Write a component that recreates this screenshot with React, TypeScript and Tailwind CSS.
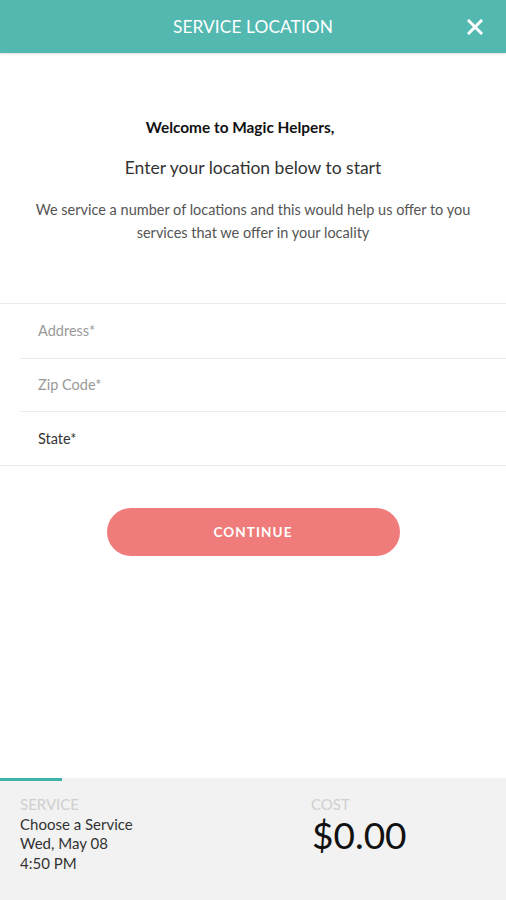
import React from "react";

export default function App() {
  return (
    <div className="w-[506px] h-[900px] flex flex-col bg-white text-[#333]" style={{ fontFamily: "Lato, 'Open Sans', sans-serif" }}>
      <header className="h-[53px] bg-[#52b8b0] flex items-center justify-center relative shadow-[0_1px_2px_rgba(0,0,0,0.15)] shrink-0">
        <h1 className="text-white text-[17.3px] tracking-[0.1px]">SERVICE LOCATION</h1>
        <svg className="absolute right-[23px] top-[19px]" width="16" height="16" viewBox="0 0 16 16">
          <path d="M2 2 L14 14 M14 2 L2 14" stroke="white" strokeWidth="3" strokeLinecap="square" />
        </svg>
      </header>
      <main className="flex-1 flex flex-col">
        <div className="flex flex-col items-center text-center pt-[64px]">
          <p className="text-[15.4px] font-bold text-[#111] leading-[20px] pr-[26px]">Welcome to Magic Helpers,</p>
          <p className="text-[17.5px] text-[#333] leading-[20px] mt-[21px]">Enter your location below to start</p>
          <p className="text-[14.5px] text-[#555] leading-[23px] mt-[20px] px-[20px]">
            We service a number of locations and this would help us offer to you
            <br />
            services that we offer in your locality
          </p>
        </div>
        <div className="mt-[59px] border-t border-b border-[#ebebeb]">
          <div className="ml-[20px] h-[55px] flex items-center pl-[18px] border-b border-[#ebebeb]">
            <span className="text-[14.5px] text-[#999]">Address*</span>
          </div>
          <div className="ml-[20px] h-[53px] flex items-center pl-[18px] border-b border-[#ebebeb]">
            <span className="text-[14.5px] text-[#999]">Zip Code*</span>
          </div>
          <div className="ml-[20px] h-[53px] flex items-center pl-[18px]">
            <span className="text-[14.5px] text-[#333]">State*</span>
          </div>
        </div>
        <div className="flex justify-center mt-[42px]">
          <button className="w-[293px] h-[48px] rounded-full bg-[#ef7b7b] text-white text-[13.5px] font-bold tracking-[1.1px]">
            CONTINUE
          </button>
        </div>
      </main>
      <footer className="h-[122px] bg-[#f2f2f2] relative shrink-0 flex">
        <div className="absolute left-0 top-0 w-[62px] h-[3px] bg-[#3fb3aa]" />
        <div className="w-[311px] pl-[20px] pt-[17px]">
          <p className="text-[15px] text-[#cfcfcf] leading-[19px]">SERVICE</p>
          <p className="text-[15px] text-[#333] leading-[20px]">Choose a Service</p>
          <p className="text-[15px] text-[#333] leading-[19px]">Wed, May 08</p>
          <p className="text-[15px] text-[#333] leading-[20px]">4:50 PM</p>
        </div>
        <div className="pt-[17px]">
          <p className="text-[15px] text-[#cfcfcf] leading-[19px]">COST</p>
          <p className="text-[37px] text-[#111] leading-[36px] mt-[3px] ml-[1px]">$0.00</p>
        </div>
      </footer>
    </div>
  );
}
